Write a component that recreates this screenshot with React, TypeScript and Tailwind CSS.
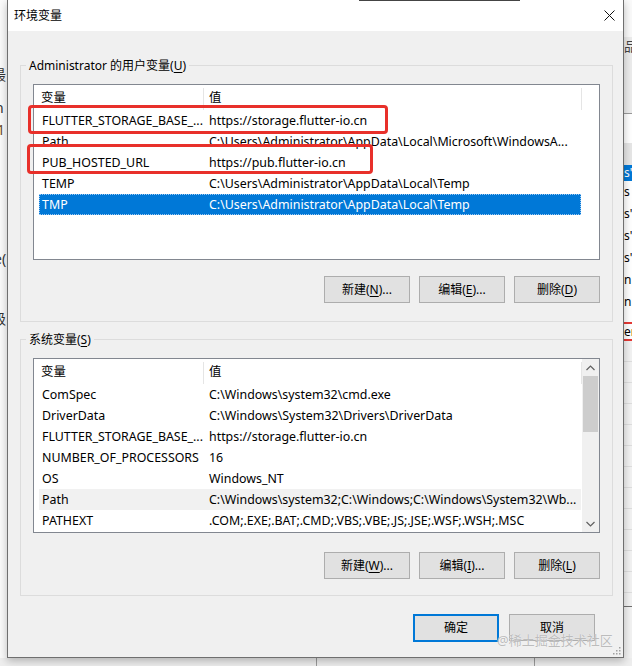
import React from 'react'

type Row = { name: string; value: string }

const userRows: Row[] = [
  { name: 'FLUTTER_STORAGE_BASE_...', value: 'https://storage.flutter-io.cn' },
  { name: 'Path', value: 'C:\\Users\\Administrator\\AppData\\Local\\Microsoft\\WindowsA...' },
  { name: 'PUB_HOSTED_URL', value: 'https://pub.flutter-io.cn' },
  { name: 'TEMP', value: 'C:\\Users\\Administrator\\AppData\\Local\\Temp' },
  { name: 'TMP', value: 'C:\\Users\\Administrator\\AppData\\Local\\Temp' },
]

const sysRows: Row[] = [
  { name: 'ComSpec', value: 'C:\\Windows\\system32\\cmd.exe' },
  { name: 'DriverData', value: 'C:\\Windows\\System32\\Drivers\\DriverData' },
  { name: 'FLUTTER_STORAGE_BASE_...', value: 'https://storage.flutter-io.cn' },
  { name: 'NUMBER_OF_PROCESSORS', value: '16' },
  { name: 'OS', value: 'Windows_NT' },
  { name: 'Path', value: 'C:\\Windows\\system32;C:\\Windows;C:\\Windows\\System32\\Wb...' },
  { name: 'PATHEXT', value: '.COM;.EXE;.BAT;.CMD;.VBS;.VBE;.JS;.JSE;.WSF;.WSH;.MSC' },
]

function Accel({ pre, k, post }: { pre: string; k: string; post: string }) {
  return (
    <>
      {pre}
      <span className="underline underline-offset-2">{k}</span>
      {post}
    </>
  )
}

function WinButton({ children, primary }: { children: React.ReactNode; primary?: boolean }) {
  return (
    <button
      className={
        primary
          ? 'w-[86px] h-[28px] bg-[#e1e1e1] border-2 border-[#0078d7] text-[12px] text-black flex items-center justify-center'
          : 'w-[86px] h-[27px] bg-[#e1e1e1] border border-[#adadad] text-[12px] text-black flex items-center justify-center'
      }
    >
      {children}
    </button>
  )
}

function Chevron({ up }: { up?: boolean }) {
  return (
    <svg width="9" height="6" viewBox="0 0 9 6">
      <polyline
        points={up ? '0.5,5 4.5,1 8.5,5' : '0.5,1 4.5,5 8.5,1'}
        fill="none"
        stroke="#606060"
        strokeWidth="1.2"
      />
    </svg>
  )
}

function ListBox({
  rows,
  selected,
  hover,
  scroll,
  className,
}: {
  rows: Row[]
  selected?: number
  hover?: number
  scroll?: boolean
  className: string
}) {
  return (
    <div className={className}>
      <div className="flex-1 flex flex-col overflow-hidden text-[12.4px]">
        {/* header */}
        <div className="flex h-[25px] items-center shrink-0 pt-[2px]">
          <div className="w-[169px] pl-[7px]">变量</div>
          <div className="w-px h-[22px] bg-[#e5e5e5]" />
          <div className="w-[377px] pl-[5px]">值</div>
          <div className="w-px h-[22px] bg-[#e5e5e5]" />
        </div>
        {/* rows */}
        <div className="flex flex-col pl-[5px]">
          {rows.map((r, i) => (
            <div
              key={i}
              className={
                i === selected
                  ? 'w-[542px] h-[21px] pt-[2px] flex items-center bg-[#0078d7] text-white outline-1 outline-dotted outline-[#9cc8f2] -outline-offset-1'
                  : i === hover
                    ? 'w-[542px] h-[21px] pt-[2px] flex items-center bg-[#f1f1f1]'
                    : 'w-[542px] h-[21px] pt-[2px] flex items-center'
              }
            >
              <div className="w-[164px] pl-[3px] whitespace-nowrap overflow-hidden">{r.name}</div>
              <div className="flex-1 pl-[6px] whitespace-nowrap overflow-hidden">{r.value}</div>
            </div>
          ))}
        </div>
      </div>
      {scroll && (
        <div className="w-[17px] bg-[#f0f0f0] flex flex-col">
          <div className="h-[17px] flex items-center justify-center">
            <Chevron up />
          </div>
          <div className="h-[56px] mx-[1px] bg-[#cdcdcd]" />
          <div className="flex-1" />
          <div className="h-[17px] flex items-center justify-center">
            <Chevron />
          </div>
        </div>
      )}
    </div>
  )
}

export default function App() {
  return (
    <div className="relative w-[632px] h-[666px] overflow-hidden bg-[#eeeeee] font-['Noto_Sans','Noto_Sans_CJK_SC',sans-serif] text-[12px] text-black">
      <div className="flex h-[658px]">
        {/* background left strip */}
        <div className="relative w-[7px] bg-[#fafafa] overflow-hidden text-[#333]">
          <span className="absolute left-[-8px] top-[64px] text-[14px]">最</span>
          <span className="absolute left-[-5px] top-[97px] text-[14px]">n</span>
          <span className="absolute left-[-3px] top-[119px] text-[14px] text-[#6b4a2b]">1</span>
          <span className="absolute left-[-6px] top-[248px] text-[14px]">e(</span>
          <span className="absolute left-[-8px] top-[308px] text-[14px]">级</span>
        </div>

        {/* dialog */}
        <div className="relative w-[617px] h-[658px] bg-[#f0f0f0] border-l border-r border-b border-[#6f6f6f] shadow-[0_3px_8px_rgba(0,0,0,0.25)] flex flex-col">
          {/* title bar */}
          <div className="h-[31px] bg-white flex items-center justify-between pl-[6px] pr-[8px] shrink-0">
            <span className="text-[12px]">环境变量</span>
            <svg width="11" height="11" viewBox="0 0 11 11">
              <path d="M0.5 0.5 L10.5 10.5 M10.5 0.5 L0.5 10.5" stroke="#111" strokeWidth="1" />
            </svg>
          </div>

          {/* user variables */}
          <fieldset className="ml-[12px] mt-[26px] w-[593px] border border-[#dcdcdc]">
            <legend className="ml-[5px] px-[3px] leading-[17px]">
              Administrator 的用户变量(<span className="underline underline-offset-2">U</span>)
            </legend>
            <div className="pl-[12px] pt-[10px] pb-[18px]">
              <ListBox
                rows={userRows}
                selected={4}
                className="w-[567px] h-[176px] bg-white border border-[#828790] flex"
              />
              <div className="flex justify-end gap-[9px] mt-[16px] w-[567px]">
                <WinButton>
                  <Accel pre="新建(" k="N" post=")..." />
                </WinButton>
                <WinButton>
                  <Accel pre="编辑(" k="E" post=")..." />
                </WinButton>
                <WinButton>
                  <Accel pre="删除(" k="D" post=")" />
                </WinButton>
              </div>
            </div>
          </fieldset>

          {/* system variables */}
          <fieldset className="ml-[12px] mt-[9px] w-[593px] border border-[#dcdcdc]">
            <legend className="ml-[5px] px-[3px] leading-[17px]">
              系统变量(<span className="underline underline-offset-2">S</span>)
            </legend>
            <div className="pl-[12px] pt-[10px] pb-[16px]">
              <ListBox
                rows={sysRows}
                hover={5}
                scroll
                className="w-[567px] h-[175px] bg-white border border-[#828790] flex"
              />
              <div className="flex justify-end gap-[9px] mt-[19px] w-[567px]">
                <WinButton>
                  <Accel pre="新建(" k="W" post=")..." />
                </WinButton>
                <WinButton>
                  <Accel pre="编辑(" k="I" post=")..." />
                </WinButton>
                <WinButton>
                  <Accel pre="删除(" k="L" post=")" />
                </WinButton>
              </div>
            </div>
          </fieldset>

          {/* OK / Cancel */}
          <div className="flex justify-end gap-[10px] mt-[18px] pr-[28px]">
            <WinButton primary>确定</WinButton>
            <WinButton>取消</WinButton>
          </div>

          {/* resize grip */}
          <svg className="absolute right-[2px] bottom-[2px]" width="9" height="9" viewBox="0 0 9 9">
            <rect x="7" y="1" width="1.5" height="1.5" fill="#a0a0a0" />
            <rect x="4" y="4" width="1.5" height="1.5" fill="#a0a0a0" />
            <rect x="7" y="4" width="1.5" height="1.5" fill="#a0a0a0" />
            <rect x="1" y="7" width="1.5" height="1.5" fill="#a0a0a0" />
            <rect x="4" y="7" width="1.5" height="1.5" fill="#a0a0a0" />
            <rect x="7" y="7" width="1.5" height="1.5" fill="#a0a0a0" />
          </svg>
        </div>

        {/* background right strip */}
        <div className="flex-1 flex flex-col overflow-hidden text-[12px] leading-[22px] whitespace-nowrap">
          <div className="h-[37px] bg-[#fafafa]" />
          <div className="h-[76px] bg-[#ececec] text-[#444] text-[13px] leading-[18px]">品</div>
          <div className="h-px bg-[#9a9a9a]" />
          <div className="h-[29px] bg-white" />
          <div className="h-[22px] bg-[#e6e6e6]" />
          <div className="h-[16px] bg-[#0078d7] text-white leading-[16px]">s'</div>
          <div className="h-[22px] bg-white">s</div>
          <div className="h-[22px] bg-white">s'</div>
          <div className="h-[22px] bg-white">s'</div>
          <div className="h-[22px] bg-white">s'</div>
          <div className="h-[22px] bg-white">n</div>
          <div className="h-[22px] bg-white">n</div>
          <div className="h-[9px] bg-white" />
          <div className="h-[2px] bg-[#e53935]" />
          <div className="h-[15px] bg-white leading-[15px]">er</div>
          <div className="h-[2px] bg-[#e53935]" />
          <div className="flex-1 bg-[#f2f2f2] flex flex-col">
            <div className="h-[265px] bg-[repeating-linear-gradient(to_bottom,#f2f2f2_0px,#f2f2f2_20px,#dedede_20px,#dedede_21px)]" />
            <div className="h-px bg-[#6f6f6f]" />
          </div>
        </div>
      </div>

      {/* background below dialog */}
      <div className="flex h-[8px]">
        <div className="w-[316px]" />
        <div className="w-px bg-[#9a9a9a]" />
        <div className="w-[217px]" />
        <div className="w-px bg-[#9a9a9a]" />
      </div>

      {/* overlays */}
      <div className="absolute top-0 left-[359px] w-[161px] h-px bg-[#444]" />
      <div className="absolute left-[28px] top-[105px] w-[360px] h-[29px] border-[3px] border-[#e8302a] rounded-[4px]" />
      <div className="absolute left-[27px] top-[144px] w-[346px] h-[30px] border-[3px] border-[#e8302a] rounded-[4px]" />
      <div className="absolute left-[497px] top-[632px] text-[13px] leading-[17px] text-[#bcbcbc] [text-shadow:0_0_1px_#ffffff]">
        @稀土掘金技术社区
      </div>
    </div>
  )
}
